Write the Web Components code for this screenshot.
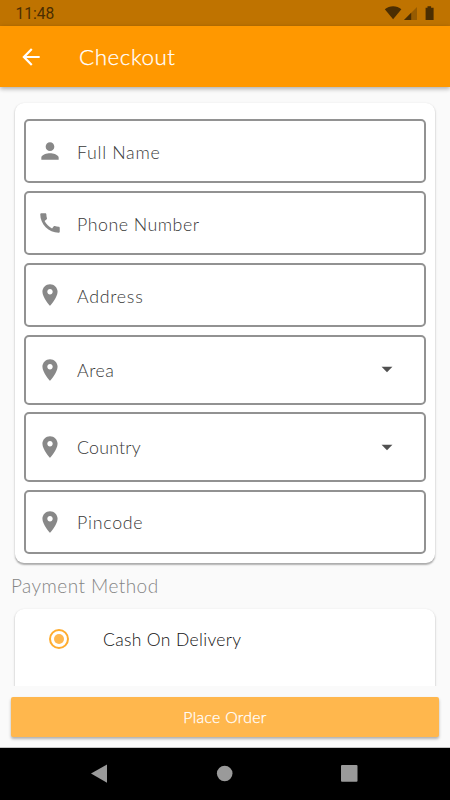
<!DOCTYPE html>
<html lang="en">
<head>
<meta charset="utf-8">
<title>Checkout</title>
<style>
html,body{margin:0;height:100%;overflow:hidden;background:#fafafa}
body{font-family:Lato,"Open Sans",sans-serif;font-weight:300}
</style>
</head>
<body>
<checkout-app></checkout-app>
<script>
const define = (name, html) => customElements.define(name, class extends HTMLElement {
  connectedCallback() {
    if (this.shadowRoot) return;
    const t = document.createElement('template');
    t.innerHTML = typeof html === 'function' ? html(this) : html;
    this.attachShadow({ mode: 'open' }).append(t.content.cloneNode(true));
  }
});

const icons = {
  person: 'M12 12c2.21 0 4-1.79 4-4s-1.79-4-4-4-4 1.79-4 4 1.79 4 4 4zm0 2c-2.67 0-8 1.34-8 4v2h16v-2c0-2.66-5.33-4-8-4z',
  phone: 'M20.01 15.38c-1.23 0-2.42-.2-3.53-.56-.35-.12-.74-.03-1.01.24l-1.57 1.97c-2.83-1.35-5.48-3.9-6.89-6.83l1.95-1.66c.27-.28.35-.67.24-1.02-.37-1.11-.56-2.3-.56-3.53 0-.54-.45-.99-.99-.99H4.19C3.65 3 3 3.24 3 3.99 3 13.28 10.73 21 20.01 21c.71 0 .99-.63.99-1.18v-3.45c0-.54-.45-.99-.99-.99z',
  place: 'M12 2C8.13 2 5 5.13 5 9c0 5.25 7 13 7 13s7-7.75 7-13c0-3.87-3.13-7-7-7zm0 9.5c-1.38 0-2.5-1.12-2.5-2.5s1.12-2.5 2.5-2.5 2.5 1.12 2.5 2.5-1.12 2.5-2.5 2.5z',
  back: 'M20 11H7.83l5.59-5.59L12 4l-8 8 8 8 1.41-1.41L7.83 13H20v-2z',
  down: 'M7 10l5 5 5-5z'
};

define('md-icon', el => `<style>
:host{display:block;flex:none;width:var(--size,26px);height:var(--size,26px)}
svg{display:block;width:100%;height:100%;fill:currentColor}
</style><svg viewBox="0 0 24 24"><path d="${icons[el.getAttribute('name')]}"/></svg>`);

define('status-bar', `<style>
:host{display:flex;flex:none;box-sizing:border-box;height:26px;padding:1px 14px 0 15.5px;align-items:center;justify-content:space-between;background:#bf7300;color:#4b2e02;font:400 15.6px/26px Roboto,sans-serif}
svg{display:block;fill:currentColor}
span{padding-top:1px}
</style><span>11:48</span>
<svg width="52" height="16" viewBox="0 0 52 16"><path d="M0.8 3.2C5.5-.9 12.8-.9 17.4 3.200L9.1 13.200z"/><path opacity=".35" d="M33 1V14H20z"/><path d="M27.2 6.800V14H20z"/><path d="M43.500 .3h3.600v1.500h2.500V14h-8V1.800h1.900z"/></svg>`);

define('app-bar', `<style>
:host{display:flex;flex:none;position:relative;z-index:1;box-sizing:border-box;height:61px;padding:0 18px;gap:35px;align-items:center;background:#ff9800;color:#fff;box-shadow:0 2px 4px rgba(0,0,0,.22),0 1px 6px rgba(0,0,0,.12);--size:26px}
span{font-size:22.4px;font-weight:300;line-height:28px;letter-spacing:.55px;-webkit-text-stroke:.25px #fff}
</style><md-icon name="back"></md-icon><span><slot></slot></span>`);

define('form-field', el => `<style>
:host{display:flex;box-sizing:border-box;height:64.4px;align-items:center;padding:0 24.5px 0 11px;border:2px solid #929292;border-radius:5px;color:#888}
:host([select]){height:69.8px}
span{flex:1;margin-left:14px;font-size:17.8px;line-height:24px;color:#383838;letter-spacing:${el.getAttribute('spacing')}px}
:host(:not([select])) span{padding-top:1px}
.arrow{color:#505050;margin-top:-1px}
</style><md-icon name="${el.getAttribute('icon')}"></md-icon><span><slot></slot></span>${el.hasAttribute('select') ? '<md-icon class="arrow" name="down"></md-icon>' : ''}`);

define('surface-card', `<style>
:host{display:flex;flex-direction:column;box-sizing:border-box;margin:0 15px;padding:var(--pad,16.500px 9px 8.500px);gap:7.600px;background:#fff;border-radius:9px;box-shadow:0 1.200px 1.500px rgba(0,0,0,.25),0 1px 3px rgba(0,0,0,.12)}
</style><slot></slot>`);

define('section-title', `<style>
:host{display:block;margin:9px 11px;height:28px;font-size:19px;line-height:28px;color:#858585;letter-spacing:.45px}
</style><slot></slot>`);

define('radio-option', `<style>
:host{display:flex;align-items:center;gap:33px;height:61px;color:#111;font-size:17.500px;letter-spacing:.35px}
svg{display:block;flex:none}
</style><svg width="22" height="22" viewBox="0 0 22 22"><circle cx="11" cy="11" r="9" fill="none" stroke="#ffac2e" stroke-width="2"/><circle cx="11" cy="11" r="5" fill="#ffb74d"/></svg><span><slot></slot></span>`);

define('order-button', `<style>
:host{display:block;flex:none;margin:11px 11px 10px;}
button{display:block;width:100%;height:40px;border:0;padding:0;border-radius:2px;background:#ffb74d;color:#fff;font:300 15.800px/40px Lato,sans-serif;letter-spacing:.3px;-webkit-text-stroke:.25px #fff;box-shadow:0 2px 3px rgba(0,0,0,.3)}
</style><button><slot></slot></button>`);

define('nav-bar', `<style>
:host{display:block;flex:none;height:52px;background:#000;border-top:1px solid #c4c4c4}
svg{display:block}
</style><svg width="450" height="52" viewBox="0 0 450 52" fill="#9a9a9a"><path d="M91 25.500L107 16.500V34.700z"/><circle cx="224.700" cy="25.500" r="7.800"/><rect x="341" y="17" width="16.500" height="16.800" rx="1"/></svg>`);

define('checkout-app', `<style>
:host{display:flex;flex-direction:column;height:800px;width:450px;overflow:hidden;background:#fafafa}
main{flex:1;min-height:0;overflow:hidden;padding-top:15.500px}
.pay{height:150px;--pad:0 33px}
</style>
<status-bar></status-bar>
<app-bar>Checkout</app-bar>
<main>
<surface-card>
<form-field icon="person" spacing=".7">Full Name</form-field>
<form-field icon="phone" spacing=".5">Phone Number</form-field>
<form-field icon="place" spacing=".75">Address</form-field>
<form-field icon="place" spacing=".55" select>Area</form-field>
<form-field icon="place" spacing=".2" select>Country</form-field>
<form-field icon="place" spacing=".75">Pincode</form-field>
</surface-card>
<section-title>Payment Method</section-title>
<surface-card class="pay"><radio-option>Cash On Delivery</radio-option></surface-card>
</main>
<order-button>Place Order</order-button>
<nav-bar></nav-bar>`);
</script>
</body>
</html>
